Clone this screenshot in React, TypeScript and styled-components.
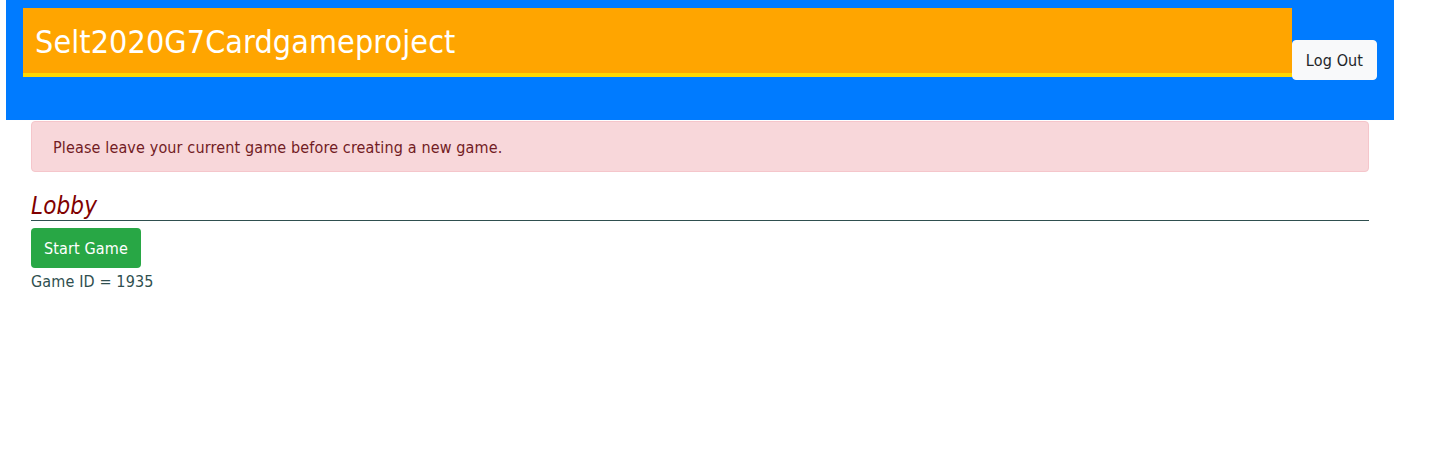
import React from "react";
import styled, { createGlobalStyle } from "styled-components";

const Global = createGlobalStyle`
  html, body { margin: 0; padding: 0; background: #fff; }
  body {
    font-family: "DejaVu Sans Condensed", "DejaVu Sans", sans-serif;
    font-stretch: condensed;
    font-size: 16px;
    line-height: 1.5;
    letter-spacing: 0.14px;
    color: #2f4f4f;
  }
  * { box-sizing: border-box; }
`;

const Page = styled.div`
  width: 1442px;
  height: 460px;
`;

const Header = styled.header`
  margin-left: 6px;
  width: 1388px;
  height: 120px;
  background: #007bff;
  padding: 8px 0 0 17px;
  display: flex;
  align-items: flex-start;
`;

const TitleBox = styled.div`
  width: 1269px;
  height: 69px;
  background: #ffa500;
  border-bottom: 4px solid #ffd700;
  display: flex;
  align-items: center;
  padding: 3px 0 0 12px;
`;

const Title = styled.h1`
  margin: 0;
  font-size: 32px;
  font-weight: 400;
  color: #fff;
  line-height: 1.2;
  letter-spacing: 0.1px;
`;

const LogOutButton = styled.button`
  margin-top: 32px;
  width: 85px;
  height: 40px;
  background: #f8f9fa;
  border: 1px solid #f8f9fa;
  border-radius: 4px;
  font-family: inherit;
  font-stretch: condensed;
  font-size: 16px;
  letter-spacing: 0.14px;
  color: #212529;
  padding: 1px 0 0;
`;

const Main = styled.main`
  padding: 0 73px 0 31px;
`;

const Alert = styled.div`
  margin-top: 1px;
  height: 51px;
  background: #f8d7da;
  border: 1px solid #f5c6cb;
  border-radius: 4px;
  color: #721c24;
  padding: 2px 21px 0;
  display: flex;
  align-items: center;
`;

const Heading = styled.h2`
  margin: 20px 0 0;
  font-size: 24px;
  font-style: italic;
  font-weight: 400;
  color: #800000;
  line-height: 28px;
  border-bottom: 1px solid #2f4f4f;
`;

const StartButton = styled.button`
  margin-top: 7px;
  width: 110px;
  height: 40px;
  background: #28a745;
  border: none;
  border-radius: 4px;
  color: #fff;
  font-family: inherit;
  font-stretch: condensed;
  font-size: 16px;
  letter-spacing: 0.14px;
  padding: 1px 0 0;
  display: block;
`;

const Info = styled.div`
  margin-top: 1px;
  line-height: 26px;
  color: #2f4f4f;
`;

export default function App() {
  return (
    <Page>
      <Global />
      <Header>
        <TitleBox>
          <Title>Selt2020G7Cardgameproject</Title>
        </TitleBox>
        <LogOutButton>Log Out</LogOutButton>
      </Header>
      <Main>
        <Alert>Please leave your current game before creating a new game.</Alert>
        <Heading>Lobby</Heading>
        <StartButton>Start Game</StartButton>
        <Info>Game ID = 1935</Info>
      </Main>
    </Page>
  );
}
